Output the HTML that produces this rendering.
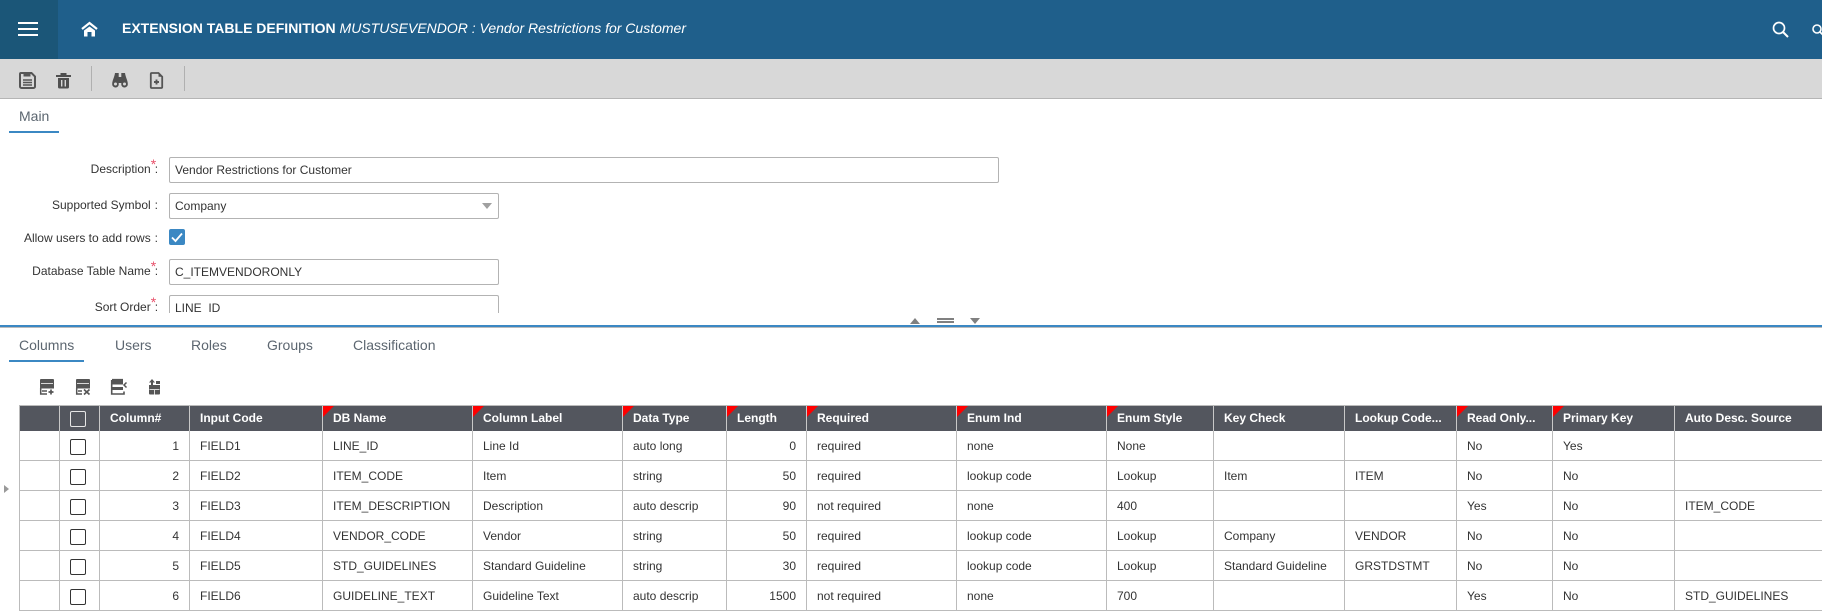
<!DOCTYPE html>
<html><head><meta charset="utf-8">
<style>
html,body{margin:0;padding:0;width:1822px;height:612px;overflow:hidden;background:#fff;font-family:"Liberation Sans",Arial,sans-serif;font-size:12px;color:#333}
.a{position:absolute}
svg{position:absolute;display:block;overflow:visible}
.lbl{position:absolute;right:1664px;width:160px;text-align:right;white-space:nowrap;line-height:16px;color:#333}
.lbl sup{color:#e8506a;font-size:14px;line-height:0;vertical-align:0;position:relative;top:-4px;display:inline-block;width:4px;text-align:left}
.lbl .c{display:inline-block;width:7.300px;text-align:right}
.lbl .s{display:inline-block;width:3.300px;text-align:right}
.inp{position:absolute;left:169px;box-sizing:border-box;height:26px;border:1px solid #b3b3b3;border-radius:2px;padding-left:5px;line-height:24px;background:#fff;color:#333}
.tab{position:absolute;top:336px;font-size:14px;line-height:18px;color:#5c6670}
table{position:absolute;left:19px;top:405px;border-collapse:separate;border-spacing:0;table-layout:fixed;width:1811px;border-left:1px solid #bbb;border-top:1px solid #bbb}
th{height:25px;padding:0 10px 2px;box-sizing:border-box;background:#53565e;color:#fff;font-size:12px;font-weight:bold;text-align:left;border-right:1px solid #c8c8c8;position:relative;white-space:nowrap;overflow:hidden}
td{height:30px;padding:0 10px;box-sizing:border-box;border-right:1px solid #bbb;border-bottom:1px solid #bbb;white-space:nowrap;overflow:hidden;color:#333}
td.r{text-align:right;padding-right:10px}
th.t:before{content:"";position:absolute;left:0;top:0;border-style:solid;border-width:11px 11px 0 0;border-color:#f00 transparent transparent transparent}
.cbh{position:absolute;left:70px;top:411px;box-sizing:border-box;width:16px;height:16px;border:1px solid #e6e6e6;border-radius:2px}
.cbr{position:absolute;left:70px;box-sizing:border-box;width:16px;height:16px;border:1px solid #333;border-radius:2px;background:#fff}
</style></head>
<body>
<div class="a" style="left:0;top:0;width:1822px;height:59px;background:#1f5f8b"></div>
<div class="a" style="left:0;top:0;width:58px;height:59px;background:#1b5678"></div>
<div class="a" style="left:18px;top:22px;width:20px;height:2px;background:#fff"></div>
<div class="a" style="left:18px;top:28px;width:20px;height:2px;background:#fff"></div>
<div class="a" style="left:18px;top:34px;width:20px;height:2px;background:#fff"></div>
<svg style="left:81px;top:21px" width="17" height="16" viewBox="0 0 17 16"><path d="M1 8 8.500 2 16 8" fill="none" stroke="#fff" stroke-width="2.200"/><path d="M3 9.500 8.500 5.500 14 9.500V15.500H10.500V11H6.500V15.500H3Z" fill="#fff"/></svg>
<div class="a" style="left:122px;top:20px;line-height:16px;font-size:14px;color:#fff;white-space:nowrap"><b>EXTENSION TABLE DEFINITION</b> <i>MUSTUSEVENDOR : Vendor Restrictions for Customer</i></div>
<svg style="left:1772px;top:21px" width="17" height="17" viewBox="0 0 17 17"><circle cx="7" cy="7" r="5.500" fill="none" stroke="#fff" stroke-width="1.700"/><path d="M11 11 16 16" stroke="#fff" stroke-width="2"/></svg>
<svg style="left:1812px;top:24px" width="12" height="12" viewBox="0 0 12 12"><circle cx="5" cy="5" r="4" fill="none" stroke="#fff" stroke-width="1.600"/><path d="M8 8 11 11" stroke="#fff" stroke-width="1.600"/></svg>

<div class="a" style="left:0;top:59px;width:1822px;height:39px;background:#d8d8d8;border-bottom:1px solid #b5b5b5"></div>
<div class="a" style="left:91px;top:66px;width:1px;height:25px;background:#b0b0b0"></div>
<div class="a" style="left:184px;top:66px;width:1px;height:25px;background:#b0b0b0"></div>
<svg style="left:19px;top:72px" width="17" height="17" viewBox="0 0 17 17"><path d="M2 1H12.500L16 4.500V14.500A1.500 1.500 0 0 1 14.500 16H2.500A1.500 1.500 0 0 1 1 14.500V2A1 1 0 0 1 2 1Z" fill="none" stroke="#555" stroke-width="2"/><rect x="4.500" y="1" width="7" height="3.500" fill="#555"/><path d="M4 8H13M4 10.500H13M4 13H13" stroke="#555" stroke-width="1.500"/></svg>
<svg style="left:56px;top:72px" width="15" height="17" viewBox="0 0 15 17"><path d="M0 3H15V5H0ZM4.500 1H10.500V3H4.500Z" fill="#505050"/><path d="M2 6H13V15A1.500 1.500 0 0 1 11.500 16.500H3.500A1.500 1.500 0 0 1 2 15Z" fill="#505050"/><path d="M5.700 8V14.500M9.300 8V14.500" stroke="#d8d8d8" stroke-width="1.400"/></svg>
<svg style="left:112px;top:72px" width="16" height="16" viewBox="0 0 16 16"><path d="M3 1H6.700V5H9.300V1H13C13.500 5 15.800 8.500 15.800 12A3.300 3.300 0 0 1 9.300 13V11H6.700V13A3.300 3.300 0 0 1 .2 12C.2 8.500 2.500 5 3 1Z" fill="#505050"/><circle cx="3.500" cy="12" r="1.500" fill="#d8d8d8"/><circle cx="12.500" cy="12" r="1.500" fill="#d8d8d8"/></svg>
<svg style="left:150px;top:72px" width="13" height="17" viewBox="0 0 13 17"><path d="M1.700 1H8.500L12.200 4.700V15A1 1 0 0 1 11.200 16H1.700A1 1 0 0 1 .8 15V2A1 1 0 0 1 1.700 1Z" fill="none" stroke="#555" stroke-width="1.800"/><path d="M8.500 1V4.700H12.200Z" fill="#555"/><path d="M6.500 7.500V12.500M4 10H9" stroke="#555" stroke-width="1.900"/></svg>

<div class="a" style="left:19px;top:107px;line-height:18px;font-size:14px;color:#5c6670">Main</div>
<div class="a" style="left:9px;top:131px;width:50px;height:2px;background:#3b88c3"></div>

<div class="lbl" style="top:161px">Description<sup>*</sup><span class="s">:</span></div>
<div class="inp" style="top:157px;width:830px">Vendor Restrictions for Customer</div>
<div class="lbl" style="top:197px">Supported Symbol<span class="c">:</span></div>
<div class="inp" style="top:193px;width:330px;line-height:25px">Company</div>
<div class="a" style="left:482px;top:203px;border-style:solid;border-width:6px 5px 0 5px;border-color:#a0a0a0 transparent transparent transparent"></div>
<div class="lbl" style="top:230px">Allow users to add rows<span class="c">:</span></div>
<div class="a" style="left:169px;top:229px;width:16px;height:16px;border-radius:2px;background:#3b88c3"></div>
<svg style="left:169px;top:229px" width="16" height="16" viewBox="0 0 16 16"><path d="M3 8.500 6.500 12 13 4.500" fill="none" stroke="#fff" stroke-width="1.800"/></svg>
<div class="lbl" style="top:263px">Database Table Name<sup>*</sup><span class="s">:</span></div>
<div class="inp" style="top:259px;width:330px">C_ITEMVENDORONLY</div>
<div class="lbl" style="top:299px">Sort Order<sup>*</sup><span class="s">:</span></div>
<div class="a" style="left:169px;top:295px;box-sizing:border-box;width:330px;height:18px;border:1px solid #b3b3b3;border-bottom:0;border-radius:2px 2px 0 0;padding-left:5px;line-height:24px;overflow:hidden;color:#333">LINE_ID</div>

<div class="a" style="left:0;top:325px;width:1822px;height:2px;background:#3b88c3"></div>
<div class="a" style="left:0;top:327px;width:1822px;height:1px;background:#bbb"></div>
<div class="a" style="left:910px;top:318px;border-style:solid;border-width:0 5px 6px 5px;border-color:transparent transparent #808080 transparent"></div>
<div class="a" style="left:937px;top:318px;width:17px;height:2px;background:#808080"></div>
<div class="a" style="left:937px;top:321px;width:17px;height:2px;background:#808080"></div>
<div class="a" style="left:970px;top:318px;border-style:solid;border-width:6px 5px 0 5px;border-color:#808080 transparent transparent transparent"></div>

<div class="tab" style="left:19px">Columns</div>
<div class="tab" style="left:115px">Users</div>
<div class="tab" style="left:191px">Roles</div>
<div class="tab" style="left:267px">Groups</div>
<div class="tab" style="left:353px">Classification</div>
<div class="a" style="left:9px;top:360px;width:75px;height:2px;background:#3b88c3"></div>

<svg style="left:40px;top:379px" width="15" height="16" viewBox="0 0 15 16"><path d="M1 0H13A1 1 0 0 1 14 1V9.500H0V1A1 1 0 0 1 1 0Z" fill="#555"/><path d="M1 4.500H13" stroke="#d8d8d8" stroke-width="1"/><path d="M.7 9V15H7M2 12H7" fill="none" stroke="#555" stroke-width="1.500"/><path d="M11 10.500V15.500M8.500 13H13.500" stroke="#555" stroke-width="1.700"/></svg>
<svg style="left:76px;top:379px" width="15" height="16" viewBox="0 0 15 16"><path d="M1 0H13A1 1 0 0 1 14 1V9.500H0V1A1 1 0 0 1 1 0Z" fill="#555"/><path d="M1 4.500H13" stroke="#d8d8d8" stroke-width="1"/><path d="M.7 9V15H6M2 12H6" fill="none" stroke="#555" stroke-width="1.500"/><path d="M8 10.500 13.500 15.500M13.500 10.500 8 15.500" stroke="#555" stroke-width="1.700"/></svg>
<svg style="left:111px;top:379px" width="16" height="16" viewBox="0 0 16 16"><path d="M1 .7H12M.7 1V15H13V12.500" fill="none" stroke="#555" stroke-width="1.600"/><rect x="1" y="1" width="11" height="4.500" fill="#555"/><rect x="1" y="8" width="11" height="3" fill="#555"/><path d="M15.500 3.500 13 6 15.500 8.500" fill="none" stroke="#555" stroke-width="1.500"/></svg>
<svg style="left:148px;top:379px" width="13" height="16" viewBox="0 0 13 16"><path d="M1 6H12V14.500A1 1 0 0 1 11 15.500H2A1 1 0 0 1 1 14.500Z" fill="#555"/><path d="M1.500 10.500H11.500M6.500 10.500V15.500" stroke="#d8d8d8" stroke-width="1"/><path d="M4 0 1 3.500H3V6H5V3.500H7ZM8 2H12V5H8Z" fill="#555"/></svg>

<div class="a" style="left:4px;top:485px;border-style:solid;border-width:4px 0 4px 5px;border-color:transparent transparent transparent #999"></div>

<table>
<colgroup><col style="width:40px"><col style="width:40px"><col style="width:90px"><col style="width:133px"><col style="width:150px"><col style="width:150px"><col style="width:104px"><col style="width:80px"><col style="width:150px"><col style="width:150px"><col style="width:107px"><col style="width:131px"><col style="width:112px"><col style="width:96px"><col style="width:122px"><col style="width:156px"></colgroup>
<tr><th></th><th></th><th>Column#</th><th>Input Code</th><th class="t">DB Name</th><th class="t">Column Label</th><th class="t">Data Type</th><th class="t">Length</th><th class="t">Required</th><th class="t">Enum Ind</th><th class="t">Enum Style</th><th>Key Check</th><th>Lookup Code...</th><th class="t">Read Only...</th><th class="t">Primary Key</th><th>Auto Desc. Source</th></tr>
<tr><td></td><td></td><td class="r">1</td><td>FIELD1</td><td>LINE_ID</td><td>Line Id</td><td>auto long</td><td class="r">0</td><td>required</td><td>none</td><td>None</td><td></td><td></td><td>No</td><td>Yes</td><td></td></tr>
<tr><td></td><td></td><td class="r">2</td><td>FIELD2</td><td>ITEM_CODE</td><td>Item</td><td>string</td><td class="r">50</td><td>required</td><td>lookup code</td><td>Lookup</td><td>Item</td><td>ITEM</td><td>No</td><td>No</td><td></td></tr>
<tr><td></td><td></td><td class="r">3</td><td>FIELD3</td><td>ITEM_DESCRIPTION</td><td>Description</td><td>auto descrip</td><td class="r">90</td><td>not required</td><td>none</td><td>400</td><td></td><td></td><td>Yes</td><td>No</td><td>ITEM_CODE</td></tr>
<tr><td></td><td></td><td class="r">4</td><td>FIELD4</td><td>VENDOR_CODE</td><td>Vendor</td><td>string</td><td class="r">50</td><td>required</td><td>lookup code</td><td>Lookup</td><td>Company</td><td>VENDOR</td><td>No</td><td>No</td><td></td></tr>
<tr><td></td><td></td><td class="r">5</td><td>FIELD5</td><td>STD_GUIDELINES</td><td>Standard Guideline</td><td>string</td><td class="r">30</td><td>required</td><td>lookup code</td><td>Lookup</td><td>Standard Guideline</td><td>GRSTDSTMT</td><td>No</td><td>No</td><td></td></tr>
<tr><td></td><td></td><td class="r">6</td><td>FIELD6</td><td>GUIDELINE_TEXT</td><td>Guideline Text</td><td>auto descrip</td><td class="r">1500</td><td>not required</td><td>none</td><td>700</td><td></td><td></td><td>Yes</td><td>No</td><td>STD_GUIDELINES</td></tr>
</table>
<div class="cbh"></div>
<div class="cbr" style="top:439px"></div>
<div class="cbr" style="top:469px"></div>
<div class="cbr" style="top:499px"></div>
<div class="cbr" style="top:529px"></div>
<div class="cbr" style="top:559px"></div>
<div class="cbr" style="top:589px"></div>
</body></html>
